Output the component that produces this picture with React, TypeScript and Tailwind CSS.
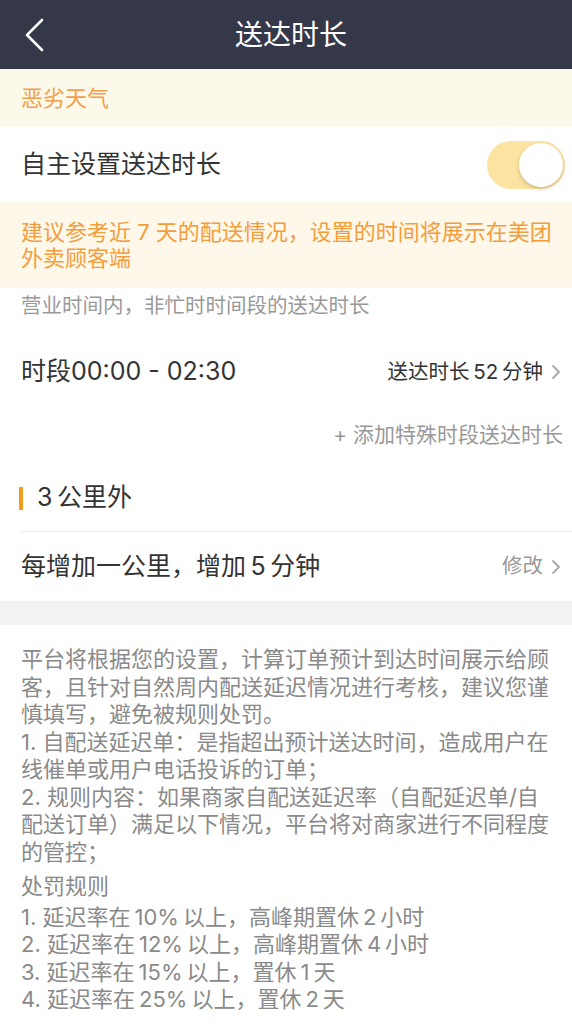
import React from "react";

const penalties = [
  "1. 延迟率在\u200910%\u2009以上，高峰期置休\u20092\u2009小时",
  "2. 延迟率在\u200912%\u2009以上，高峰期置休\u20094\u2009小时",
  "3. 延迟率在\u200915%\u2009以上，置休\u20091\u2009天",
  "4. 延迟率在\u200925%\u2009以上，置休\u20092\u2009天",
];

const ruleLines = [
  "平台将根据您的设置，计算订单预计到达时间展示给顾",
  "客，且针对自然周内配送延迟情况进行考核，建议您谨",
  "慎填写，避免被规则处罚。",
  "1. 自配送延迟单：是指超出预计送达时间，造成用户在",
  "线催单或用户电话投诉的订单；",
  "2. 规则内容：如果商家自配送延迟率（自配延迟单/自",
  "配送订单）满足以下情况，平台将对商家进行不同程度",
  "的管控；",
];

function Chevron() {
  return (
    <svg width="10" height="16" viewBox="0 0 10 16" fill="none" className="ml-[8px]">
      <path d="M2 2l6 6-6 6" stroke="#a8a8a8" strokeWidth="1.8" strokeLinecap="round" strokeLinejoin="round" />
    </svg>
  );
}

export default function App() {
  return (
    <div className="w-[572px] min-h-screen bg-white font-['Inter','Noto_Sans_CJK_SC',sans-serif]">
      {/* Nav bar */}
      <div className="grid h-[69px] grid-cols-[86px_1fr_76px] items-center bg-[#353849]">
        <div className="pl-[24px]">
          <svg width="22" height="34" viewBox="0 0 22 34" fill="none">
            <path d="M18 2L3 17l15 15" stroke="#ffffff" strokeWidth="2.6" strokeLinecap="round" strokeLinejoin="round" />
          </svg>
        </div>
        <div className="text-center text-[28px] text-white">送达时长</div>
        <div />
      </div>

      {/* Weather */}
      <div className="flex h-[58px] items-center bg-[#fdf9ea] px-[21px] text-[22px] text-[#f0a04c]">
        恶劣天气
      </div>

      {/* Toggle row */}
      <div className="flex h-[75px] items-center justify-between pl-[21px] pr-[7px]">
        <span className="text-[25px] text-[#333333]">自主设置送达时长</span>
        <div className="flex h-[48px] w-[78px] items-center justify-end rounded-full bg-[#fde3a1] px-[2px]">
          <div className="h-[44px] w-[44px] rounded-full bg-white shadow-[0_2px_4px_rgba(0,0,0,0.18)]" />
        </div>
      </div>

      {/* Tip */}
      <div className="bg-[#fdf8ea] py-[17px] pl-[21px] pr-[12px] text-[22px] leading-[26px] text-[#f49d3c]">
        建议参考近 7 天的配送情况，设置的时间将展示在美团
        <br />
        外卖顾客端
      </div>

      <div className="flex h-[36px] items-center px-[21px] text-[20.5px] text-[#999999]">
        营业时间内，非忙时时间段的送达时长
      </div>

      <div className="flex h-[96px] items-center justify-between pl-[21px] pr-[11px]">
        <span className="text-[25px] text-[#333333]">时段00:00 - 02:30</span>
        <div className="flex items-center text-[20.5px] text-[#333333]">
          {"送达时长\u200952\u2009分钟"}
          <Chevron />
        </div>
      </div>

      <div className="flex h-[30px] items-center justify-end pr-[9px] text-[21px] text-[#999999]">
        + 添加特殊时段送达时长
      </div>

      {/* 3km section */}
      <div className="pt-[15px]">
        <div className="flex h-[66px] items-center pl-[19px]">
          <div className="h-[23px] w-[4px] bg-[#f29b1c]" />
          <span className="ml-[14px] text-[25px] text-[#333333]">{"3\u2009公里外"}</span>
        </div>
        <div className="ml-[20px] h-px bg-[#ececec]" />
        <div className="flex h-[69px] items-center justify-between pl-[21px] pr-[11px]">
          <span className="text-[25px] text-[#333333]">{"每增加一公里，增加\u20095\u2009分钟"}</span>
          <div className="flex items-center text-[20.5px] text-[#999999]">
            修改
            <Chevron />
          </div>
        </div>
      </div>

      <div className="h-[24px] bg-[#f2f2f2]" />

      {/* Rules */}
      <div className="pt-[21px] pb-[20px] pl-[21px] pr-[8px] text-[22px] leading-[27.5px] whitespace-nowrap text-[#8a8a8a]">
        <p>
          {ruleLines.map((line, i) => (
            <React.Fragment key={i}>
              {line}
              {i < ruleLines.length - 1 && <br />}
            </React.Fragment>
          ))}
        </p>
        <p className="mt-[7px]">处罚规则</p>
        <p className="mt-[3px]">
          {penalties.map((line, i) => (
            <React.Fragment key={i}>
              {line}
              {i < penalties.length - 1 && <br />}
            </React.Fragment>
          ))}
        </p>
      </div>
    </div>
  );
}
